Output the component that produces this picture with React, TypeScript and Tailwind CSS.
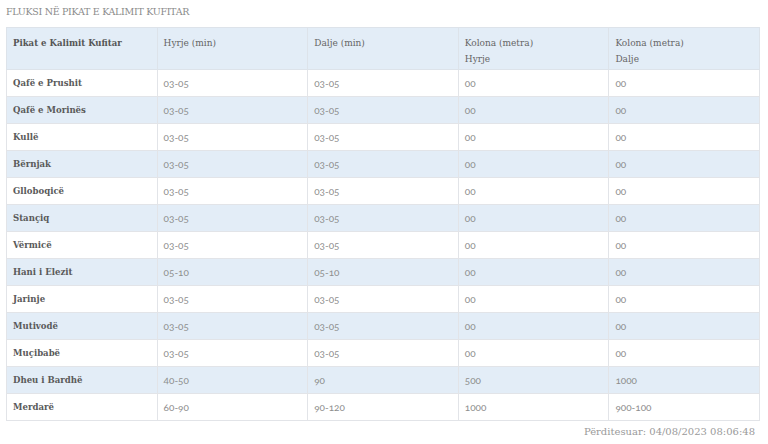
import React from "react";

const rows: [string, string, string, string, string][] = [
  ["Qafë e Prushit", "03-05", "03-05", "00", "00"],
  ["Qafë e Morinës", "03-05", "03-05", "00", "00"],
  ["Kullë", "03-05", "03-05", "00", "00"],
  ["Bërnjak", "03-05", "03-05", "00", "00"],
  ["Glloboqicë", "03-05", "03-05", "00", "00"],
  ["Stançiq", "03-05", "03-05", "00", "00"],
  ["Vërmicë", "03-05", "03-05", "00", "00"],
  ["Hani i Elezit", "05-10", "05-10", "00", "00"],
  ["Jarinje", "03-05", "03-05", "00", "00"],
  ["Mutivodë", "03-05", "03-05", "00", "00"],
  ["Muçibabë", "03-05", "03-05", "00", "00"],
  ["Dheu i Bardhë", "40-50", "90", "500", "1000"],
  ["Merdarë", "60-90", "90-120", "1000", "900-100"],
];

const slab = "font-['DejaVu_Serif_Condensed','DejaVu_Serif',serif]";
const slabN = "font-['DejaVu_Serif',serif]";
const sans = "font-['Lato',sans-serif]";

export default function App() {
  return (
    <div className="w-[768px] h-[444px] bg-white overflow-hidden">
      <div className={`${slabN} pl-[6px] pt-[5px] h-[27px] text-[9.5px] text-[#8a8a8a] uppercase tracking-[-0.3px]`}>
        Fluksi në Pikat e Kalimit Kufitar
      </div>
      <table className="ml-[6px] w-[754px] border-collapse table-fixed">
        <thead>
          <tr className="bg-[#e3edf7] h-[42px]">
            {[
              ["Pikat e Kalimit Kufitar"],
              ["Hyrje (min)"],
              ["Dalje (min)"],
              ["Kolona (metra)", "Hyrje"],
              ["Kolona (metra)", "Dalje"],
            ].map((lines, i) => (
              <th
                key={i}
                className={`border border-[#dde3ea] align-top text-left pl-[6px] pt-[7px] leading-[16px] ${i === 0 ? `${slab} text-[9.5px] font-bold text-[#555]` : `${slabN} text-[9px] font-normal text-[#666]`}`}
              >
                {lines.map((l, j) => (
                  <div key={j}>{l}</div>
                ))}
              </th>
            ))}
          </tr>
        </thead>
        <tbody>
          {rows.map((r, ri) => (
            <tr key={ri} className={`h-[27px] ${ri % 2 === 1 ? "bg-[#e3edf7]" : "bg-white"}`}>
              {r.map((c, ci) => (
                <td
                  key={ci}
                  className={`border border-[#e2e4e8] pl-[6px] ${ci === 0 ? `${slab} text-[9.5px] font-bold text-[#5a5a5a]` : `${sans} text-[10px] text-[#8d8d8d] oldstyle-nums`}`}
                >
                  {c}
                </td>
              ))}
            </tr>
          ))}
        </tbody>
      </table>
      <div className={`${slabN} w-[755px] text-right pt-[3px] text-[10px] text-[#9a9a9a]`}>
        Përditesuar: 04/08/2023 08:06:48
      </div>
    </div>
  );
}
